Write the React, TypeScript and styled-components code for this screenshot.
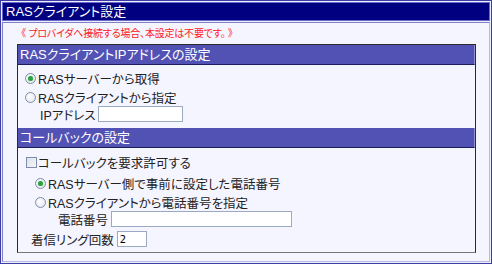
import styled, { createGlobalStyle } from "styled-components";

const Global = createGlobalStyle`
  html, body {
    margin: 0;
    padding: 0;
    background: #ffffff;
  }
  body {
    font-family: "Liberation Sans", "Noto Sans CJK JP", sans-serif;
    font-feature-settings: "palt";
  }
`;

const Frame = styled.div`
  box-sizing: border-box;
  width: 492px;
  height: 264px;
  border: 1px solid #3c3ca4;
  background: #eeeefa;
  padding: 1px;
  display: flex;
  flex-direction: column;
  gap: 1px;
`;

const TitleBar = styled.div`
  box-sizing: border-box;
  height: 19px;
  background: #000080;
  border: 1px solid #6a6ac8;
  color: #ffffff;
  font-size: 13px;
  line-height: 17px;
  padding-left: 3px;
  white-space: nowrap;
`;

const Panel = styled.div`
  box-sizing: border-box;
  flex: 1;
  background: #f5f5ff;
  border: 1px solid #8080c8;
  border-right-color: #b8b8e4;
  border-bottom-color: #b8b8e4;
  padding: 0 13px 8px 14px;
  display: flex;
  flex-direction: column;
`;

const Notice = styled.div`
  color: #ff2020;
  font-size: 10px;
  letter-spacing: -0.2px;
  height: 21px;
  line-height: 21px;
  padding-left: 4px;
  white-space: nowrap;
`;

const Box = styled.div`
  box-sizing: border-box;
  flex: 1;
  border: 1px solid #2a2a2a;
  border-bottom-color: #777777;
  display: flex;
  flex-direction: column;
`;

const SectionHead = styled.div`
  box-sizing: border-box;
  height: 20px;
  background: #5252b4;
  border-right: 1px solid #9494d4;
  border-bottom: 1px solid #1c1c5c;
  color: #ffffff;
  font-size: 13px;
  line-height: 19px;
  padding-left: 2px;
  white-space: nowrap;
`;

const SectionBody = styled.div<{ $pad: string }>`
  display: flex;
  flex-direction: column;
  padding: ${(p) => p.$pad};
`;

const Row = styled.label<{ $indent: number; $h: number; $top?: number }>`
  display: flex;
  align-items: center;
  height: ${(p) => p.$h}px;
  margin-top: ${(p) => p.$top ?? 0}px;
  padding-left: ${(p) => p.$indent}px;
  font-size: 12.5px;
  color: #222222;
  white-space: nowrap;
`;

const Radio = styled.span<{ $on?: boolean }>`
  box-sizing: border-box;
  width: 11px;
  height: 11px;
  border-radius: 50%;
  border: 1px solid #7d8cac;
  background: radial-gradient(circle at 40% 40%, #ffffff 0%, #e8ebf0 70%, #d4d8e0 100%);
  margin-right: 2px;
  display: flex;
  align-items: center;
  justify-content: center;
  flex: none;
  &::after {
    content: "";
    display: ${(p) => (p.$on ? "block" : "none")};
    width: 5px;
    height: 5px;
    border-radius: 50%;
    background: #2ea043;
    box-shadow: 0 0 1px #6fd17a;
  }
`;

const Check = styled.span`
  box-sizing: border-box;
  width: 11px;
  height: 11px;
  border: 1px solid #7d8cac;
  background: linear-gradient(135deg, #e0e2e8 0%, #f6f6f8 100%);
  margin-right: 1px;
  flex: none;
`;

const Field = styled.input<{ $w: number; $gap?: number }>`
  box-sizing: border-box;
  width: ${(p) => p.$w}px;
  height: 16px;
  border: 1px solid #9aaac4;
  background: #ffffff;
  margin-left: ${(p) => p.$gap ?? 4}px;
  padding: 0 2px;
  font-family: "DejaVu Sans", sans-serif;
  font-size: 10px;
  color: #000000;
  outline: none;
`;

export default function App() {
  return (
    <>
      <Global />
      <Frame>
        <TitleBar>RASクライアント設定</TitleBar>
        <Panel>
          <Notice>《 プロバイダへ接続する場合、本設定は不要です。 》</Notice>
          <Box>
            <SectionHead>RASクライアントIPアドレスの設定</SectionHead>
            <SectionBody $pad="3px 0 6px 0">
              <Row $indent={7} $h={20}>
                <Radio $on />
                RASサーバーから取得
              </Row>
              <Row $indent={7} $h={18}>
                <Radio />
                RASクライアントから指定
              </Row>
              <Row $indent={22} $h={16}>
                IPアドレス
                <Field $w={85} $gap={2} defaultValue="" />
              </Row>
            </SectionBody>
            <SectionHead>コールバックの設定</SectionHead>
            <SectionBody $pad="4px 0 0 0">
              <Row $indent={8} $h={20}>
                <Check />
                コールバックを要求許可する
              </Row>
              <Row $indent={17} $h={22}>
                <Radio $on />
                RASサーバー側で事前に設定した電話番号
              </Row>
              <Row $indent={17} $h={17}>
                <Radio />
                RASクライアントから電話番号を指定
              </Row>
              <Row $indent={40} $h={16}>
                電話番号
                <Field $w={181} $gap={3} defaultValue="" />
              </Row>
              <Row $indent={13} $h={16} $top={4}>
                着信リング回数
                <Field $w={30} $gap={3} defaultValue="2" />
              </Row>
            </SectionBody>
          </Box>
        </Panel>
      </Frame>
    </>
  );
}
